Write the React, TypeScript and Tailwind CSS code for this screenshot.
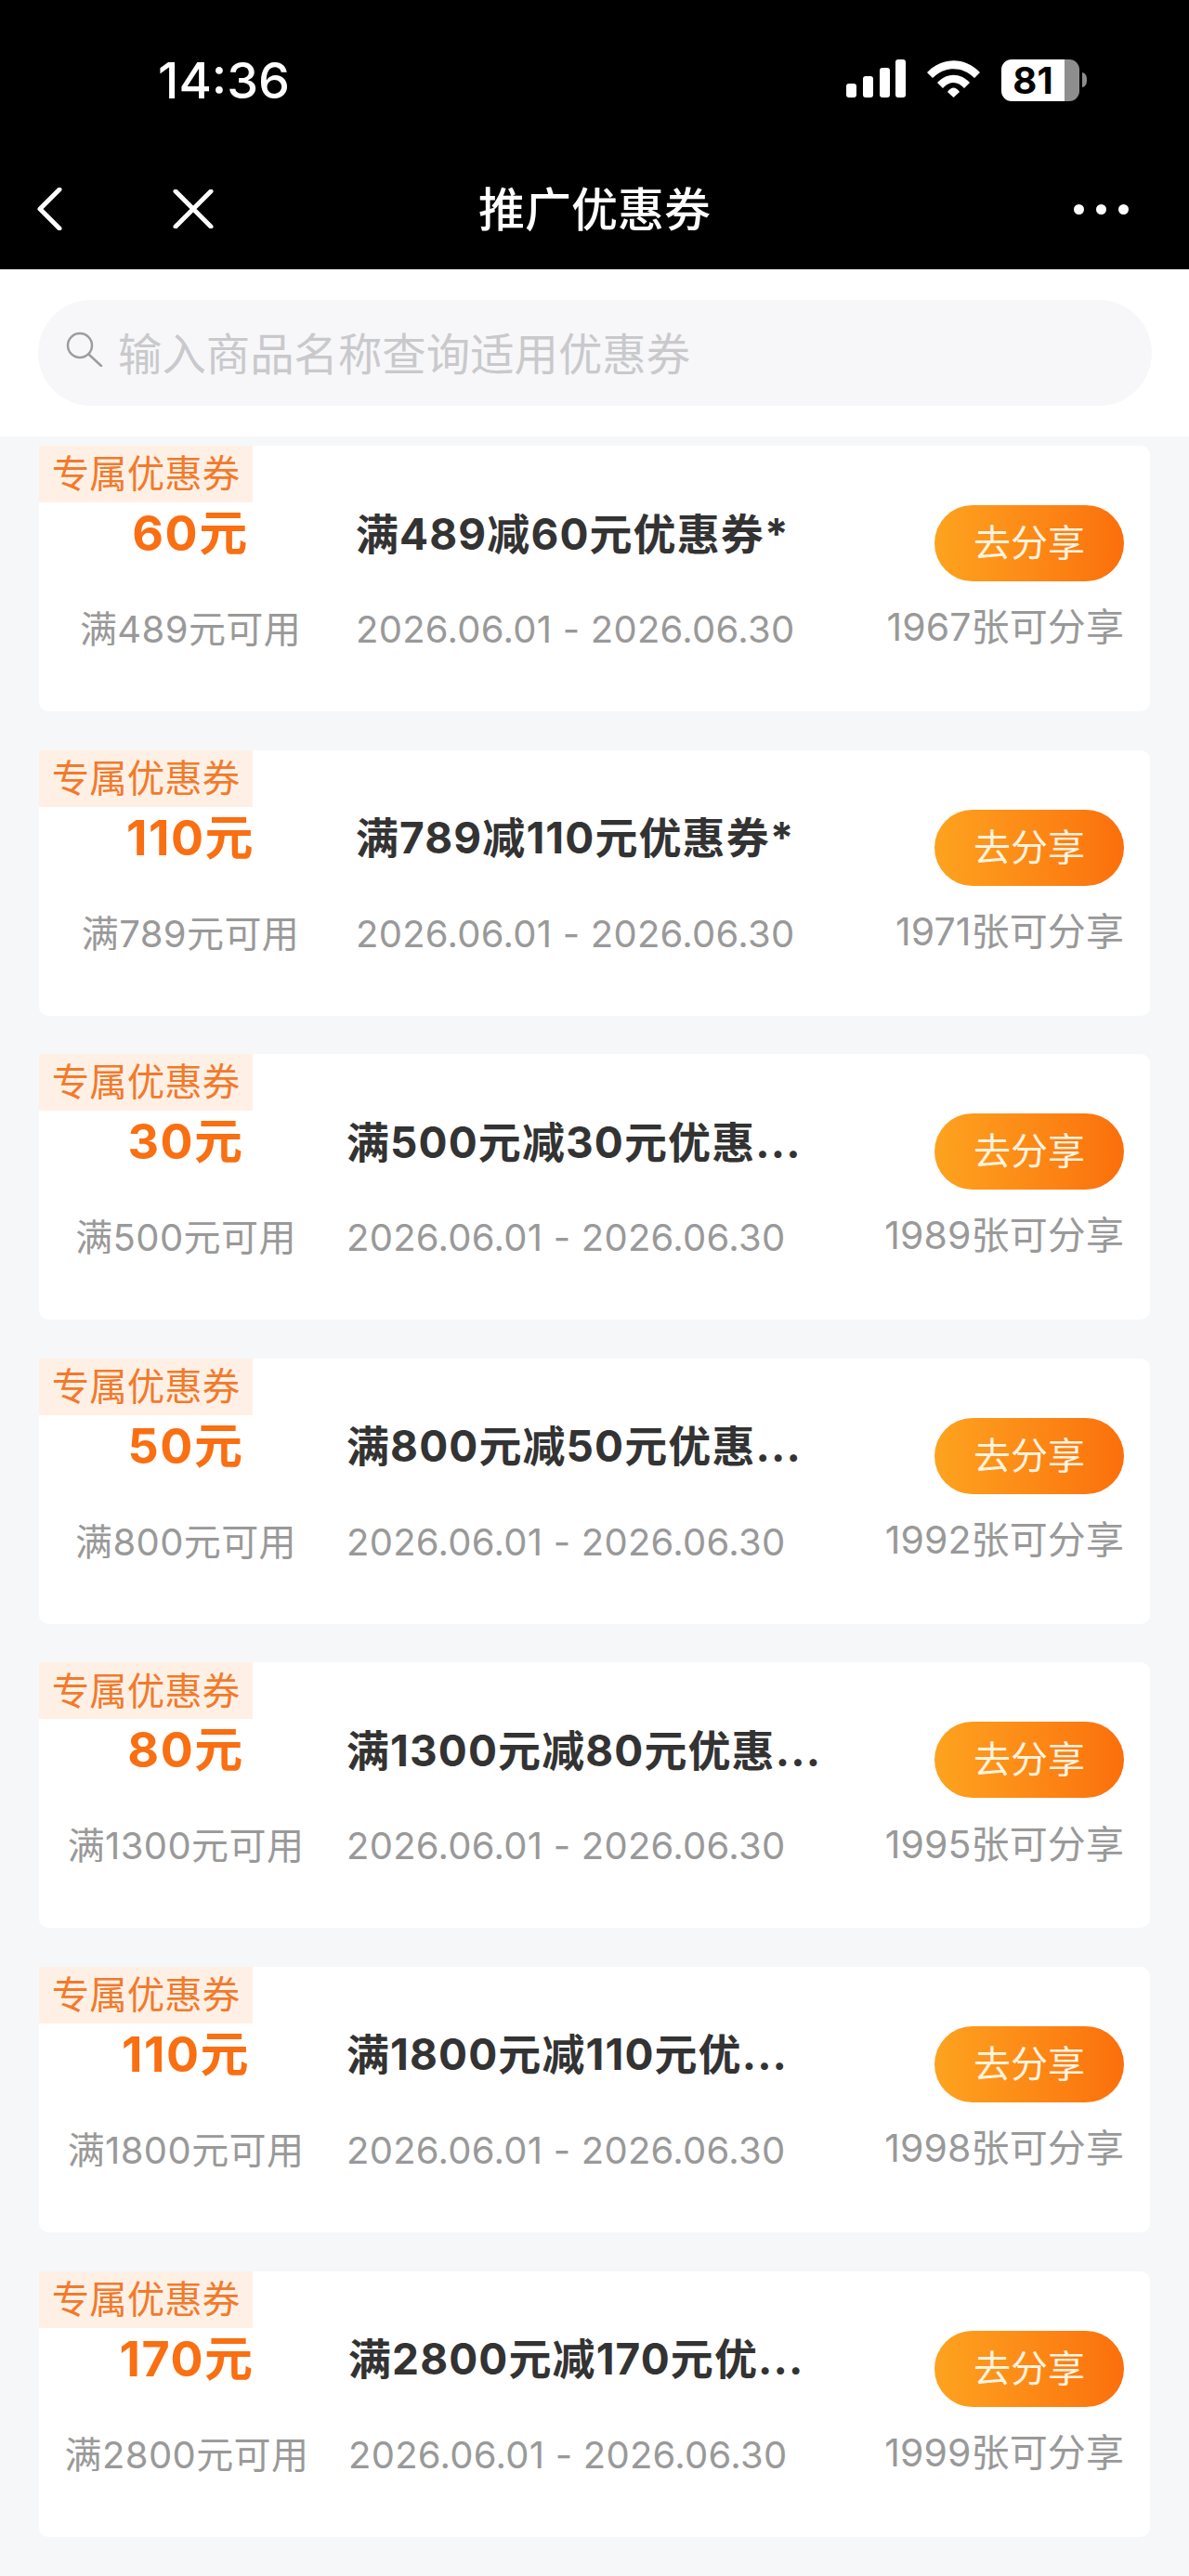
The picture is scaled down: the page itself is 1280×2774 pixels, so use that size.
const FONT = "font-['Inter','Noto_Sans_CJK_SC',sans-serif]";

type Coupon = {
  amount: string;
  min: string;
  title: string;
  count: string;
  left: number;
};

const coupons: Coupon[] = [
  { amount: "60元", min: "满489元可用", title: "满489减60元优惠券*", count: "1967张可分享", left: 326 },
  { amount: "110元", min: "满789元可用", title: "满789减110元优惠券*", count: "1971张可分享", left: 326 },
  { amount: "30元", min: "满500元可用", title: "满500元减30元优惠...", count: "1989张可分享", left: 316 },
  { amount: "50元", min: "满800元可用", title: "满800元减50元优惠...", count: "1992张可分享", left: 316 },
  { amount: "80元", min: "满1300元可用", title: "满1300元减80元优惠...", count: "1995张可分享", left: 316 },
  { amount: "110元", min: "满1800元可用", title: "满1800元减110元优...", count: "1998张可分享", left: 316 },
  { amount: "170元", min: "满2800元可用", title: "满2800元减170元优...", count: "1999张可分享", left: 318 },
];

function StatusIcons() {
  return (
    <svg width="262" height="46" viewBox="0 0 262 46" className="block">
      <rect x="0" y="26" width="11" height="15" rx="3" fill="#fff" />
      <rect x="18" y="18" width="11" height="23" rx="3" fill="#fff" />
      <rect x="36" y="9" width="11" height="32" rx="3" fill="#fff" />
      <rect x="53" y="0" width="11" height="41" rx="3" fill="#fff" />
      <path d="M87 14 C103 -3 128 -3 144 14 L138 20 C125 7 106 7 93 20 Z" fill="#fff" />
      <path d="M98 25 C108 14 123 14 133 25 L127 31 C120 23 111 23 104 31 Z" fill="#fff" />
      <path d="M109 35 C113 29 118 29 122 35 L115.5 41 Z" fill="#fff" />
      <path d="M178 0 H235 V45 H178 A11 11 0 0 1 167 34 V11 A11 11 0 0 1 178 0 Z" fill="#fff" />
      <path d="M235 0 H240 A11 11 0 0 1 251 11 V34 A11 11 0 0 1 240 45 H235 Z" fill="#8e8e8e" />
      <path d="M254 14 C258 15 259 18 259 22 C259 26 258 29 254 30 Z" fill="#8e8e8e" />
    </svg>
  );
}

function CouponCard({ c }: { c: Coupon }) {
  return (
    <div className="relative flex h-[286px] rounded-[10px] bg-white">
      <div className="absolute left-0 top-0 flex h-[61px] w-[230px] items-center justify-center bg-[#fff0e6] pt-[2px] text-[40.5px] leading-none text-[#f27a2b]">
        专属优惠券
      </div>
      <div className="flex shrink-0 flex-col items-center pt-[65px]" style={{ width: c.left }}>
        <div className="flex h-[60px] items-center whitespace-nowrap text-[52px] font-bold tracking-[1.5px] text-[#f96f12]">
          {c.amount}
        </div>
        <div className="mt-[43px] flex h-[60px] items-center whitespace-nowrap text-[40px] tracking-[0.4px] text-[#999999]">
          {c.min}
        </div>
      </div>
      <div className="ml-[15px] flex flex-col pt-[65px]">
        <div className="flex h-[60px] items-center whitespace-nowrap text-[46px] font-bold tracking-[1.1px] text-[#333333]">
          {c.title}
        </div>
        <div className="mt-[43px] flex h-[60px] items-center whitespace-nowrap text-[40px] tracking-[0.25px] text-[#999999]">
          2026.06.01 - 2026.06.30
        </div>
      </div>
      <div className="ml-auto flex flex-col items-end pr-[28px] pt-[64px]">
        <div className="flex h-[82px] w-[204px] items-center justify-center rounded-full bg-gradient-to-r from-[#fda31f] to-[#fb6f0c] text-[40px] leading-none text-[#fff3e0]">
          去分享
        </div>
        <div className="mt-[20px] flex h-[60px] items-center whitespace-nowrap text-[41px] tracking-[0.1px] text-[#999999]">
          {c.count}
        </div>
      </div>
    </div>
  );
}

export default function App() {
  return (
    <div className={`${FONT} min-h-[2774px] w-[1280px] bg-[#f6f7f9]`}>
      <header className="h-[290px] bg-black text-white">
        <div className="flex h-[174px] items-center justify-between pl-[170px] pr-[107px]">
          <div className="text-[54px] font-medium leading-none">14:36</div>
          <div className="relative">
            <StatusIcons />
            <span className="absolute left-[167px] top-0 flex h-[45px] w-[68px] items-center justify-center text-[40px] font-bold leading-none text-black">
              81
            </span>
          </div>
        </div>
        <div className="relative flex h-[116px] items-center justify-between pb-[14px] pl-[39px] pr-[65px]">
          <div className="flex items-center gap-[119px]">
            <svg width="28" height="46" viewBox="0 0 28 46" className="block">
              <path d="M25 2 L4 23 L25 44" fill="none" stroke="#fff" strokeWidth="5" strokeLinecap="round" strokeLinejoin="round" />
            </svg>
            <svg width="44" height="42" viewBox="0 0 44 42" className="block">
              <path d="M3 2 L41 40 M41 2 L3 40" fill="none" stroke="#fff" strokeWidth="5" strokeLinecap="round" />
            </svg>
          </div>
          <div className="absolute left-1/2 top-[2px] -translate-x-1/2 whitespace-nowrap text-[50px] font-medium leading-[100px]">
            推广优惠券
          </div>
          <div className="flex gap-[13px]">
            <span className="h-[11px] w-[11px] rounded-full bg-white" />
            <span className="h-[11px] w-[11px] rounded-full bg-white" />
            <span className="h-[11px] w-[11px] rounded-full bg-white" />
          </div>
        </div>
      </header>
      <div className="bg-white px-[41px] py-[33px]">
        <div className="flex h-[114px] w-[1199px] items-center gap-[16px] rounded-full bg-[#f7f7f9] pl-[30px]">
          <svg width="40" height="38" viewBox="0 0 40 38" className="block -translate-y-[4px]">
            <circle cx="15" cy="15" r="13" fill="none" stroke="#9d9d9f" strokeWidth="2.5" />
            <path d="M25 25 L38 37" stroke="#9d9d9f" strokeWidth="2.5" strokeLinecap="round" />
          </svg>
          <span className="pt-[3px] text-[47.4px] leading-none text-[#c9c9cc]">输入商品名称查询适用优惠券</span>
        </div>
      </div>
      <div className="flex flex-col gap-[41.6px] px-[42px] pt-[10px]">
        {coupons.map((c) => (
          <CouponCard key={c.title} c={c} />
        ))}
      </div>
    </div>
  );
}
